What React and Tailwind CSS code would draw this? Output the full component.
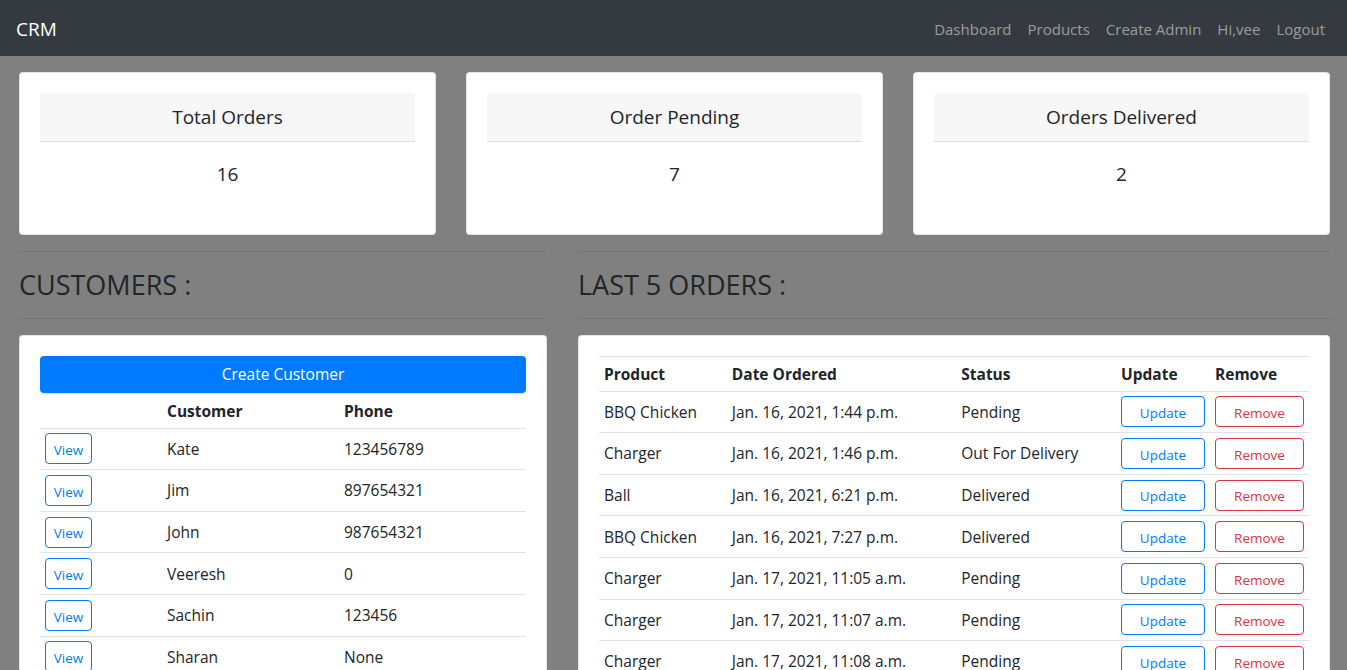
import React from 'react';

const stats = [
    {title: 'Total Orders', value: 16},
    {title: 'Order Pending', value: 7},
    {title: 'Orders Delivered', value: 2}
]

const customers = [
    {name: 'Kate', phone: '123456789'},
    {name: 'Jim', phone: '897654321'},
    {name: 'John', phone: '987654321'},
    {name: 'Veeresh', phone: '0'},
    {name: 'Sachin', phone: '123456'},
    {name: 'Sharan', phone: 'None'}
]

const orders = [
    {product: 'BBQ Chicken', date: 'Jan. 16, 2021, 1:44 p.m.', status: 'Pending'},
    {product: 'Charger', date: 'Jan. 16, 2021, 1:46 p.m.', status: 'Out For Delivery'},
    {product: 'Ball', date: 'Jan. 16, 2021, 6:21 p.m.', status: 'Delivered'},
    {product: 'BBQ Chicken', date: 'Jan. 16, 2021, 7:27 p.m.', status: 'Delivered'},
    {product: 'Charger', date: 'Jan. 17, 2021, 11:05 a.m.', status: 'Pending'},
    {product: 'Charger', date: 'Jan. 17, 2021, 11:07 a.m.', status: 'Pending'},
    {product: 'Charger', date: 'Jan. 17, 2021, 11:08 a.m.', status: 'Pending'}
]

const navLinks = ['Dashboard', 'Products', 'Create Admin', 'Hi,vee', 'Logout']

const font = {fontFamily: '"Open Sans", "Noto Sans", sans-serif'}

// bootstrap .table-sm cell
const cell = "px-[5px] py-[4.8px]"

function Navbar() {
    return (
        <nav className="h-14 bg-[#343a40] flex items-center justify-between pl-4 pr-[14px] pt-[2px]">
            <a href="#" className="text-white text-[19px]">CRM</a>
            <ul className="flex">
                {navLinks.map((l, i) => (
                    <li key={i}>
                        <a href="#" className="block px-2 text-[15px] text-[#9a9da0]">{l}</a>
                    </li>
                ))}
            </ul>
        </nav>
    )
}

function StatCard({title, value}) {
    return (
        <div className="bg-white rounded border border-black/10 p-5 pb-[21px]">
            <div className="bg-[#f7f7f7] rounded-t border-b border-[#dcdcdc] py-3 text-center text-[19px] leading-6 text-[#212529]">
                {title}
            </div>
            <div className="pt-5 pb-[27px] text-center text-[19px] leading-6 text-[#212529]">
                {value}
            </div>
        </div>
    )
}

function SectionTitle({children}) {
    return (
        <div>
            <hr className="border-t border-black/10 my-4" />
            <h3 className="text-[27px] leading-[34px] text-[#212529] font-normal">{children}</h3>
            <hr className="border-t border-black/10 my-4" />
        </div>
    )
}

function CustomersCard() {
    return (
        <div className="bg-white rounded border border-black/10 p-5 pb-[21px]">
            <button className="w-full h-[37px] bg-[#007bff] text-white rounded text-[15.5px]">
                Create Customer
            </button>
            <table className="w-full text-[15.5px] text-[#212529]">
                <thead>
                <tr className="border-t border-[#dee2e6]">
                    <th className={`w-[122px] ${cell} text-left font-bold leading-6`}></th>
                    <th className={`w-[177px] ${cell} text-left font-bold leading-6`}>Customer</th>
                    <th className={`${cell} text-left font-bold leading-6`}>Phone</th>
                </tr>
                </thead>
                <tbody>
                {customers.map((c, i) => (
                    <tr key={i} className="border-t border-[#dee2e6] align-middle">
                        <td className={cell}>
                            <button className="w-[47px] h-[31px] border border-[#007bff] text-[#007bff] rounded text-[13.5px] pt-[3px]">
                                View
                            </button>
                        </td>
                        <td className={`${cell} leading-6`}>{c.name}</td>
                        <td className={`${cell} leading-6`}>{c.phone}</td>
                    </tr>
                ))}
                </tbody>
            </table>
        </div>
    )
}

function OrdersCard() {
    return (
        <div className="bg-white rounded border border-black/10 p-5 pb-[21px]">
            <table className="w-full text-[15.5px] text-[#212529]">
                <thead>
                <tr className="border-t border-[#dee2e6]">
                    <th className={`w-[128px] ${cell} text-left font-bold leading-6`}>Product</th>
                    <th className={`w-[230px] ${cell} text-left font-bold leading-6`}>Date Ordered</th>
                    <th className={`w-[160px] ${cell} text-left font-bold leading-6`}>Status</th>
                    <th className={`w-[94px] ${cell} text-left font-bold leading-6`}>Update</th>
                    <th className={`${cell} text-left font-bold leading-6`}>Remove</th>
                </tr>
                </thead>
                <tbody>
                {orders.map((o, i) => (
                    <tr key={i} className="border-t border-[#dee2e6] align-middle">
                        <td className={`${cell} leading-6`}>{o.product}</td>
                        <td className={`${cell} leading-6`}>{o.date}</td>
                        <td className={`${cell} leading-6`}>{o.status}</td>
                        <td className={cell}>
                            <button className="w-[84px] h-[31px] border border-[#007bff] text-[#007bff] rounded text-[13.5px] pt-[3px]">
                                Update
                            </button>
                        </td>
                        <td className={cell}>
                            <button className="w-[89px] h-[31px] border border-[#dc3545] text-[#dc3545] rounded text-[13.5px] pt-[3px]">
                                Remove
                            </button>
                        </td>
                    </tr>
                ))}
                </tbody>
            </table>
        </div>
    )
}

export default function App() {
    return (
        <div className="h-screen overflow-hidden bg-[#808080]" style={font}>
            <Navbar />
            <div className="pl-[19px] pr-[17px] pt-4">
                <div className="grid grid-cols-3 gap-[30px]">
                    {stats.map((s, i) => <StatCard key={i} title={s.title} value={s.value} />)}
                </div>
                <div className="grid grid-cols-[528px_1fr] gap-[31px]">
                    <div>
                        <SectionTitle>CUSTOMERS :</SectionTitle>
                        <CustomersCard />
                    </div>
                    <div>
                        <SectionTitle>LAST 5 ORDERS :</SectionTitle>
                        <OrdersCard />
                    </div>
                </div>
            </div>
        </div>
    )
}
